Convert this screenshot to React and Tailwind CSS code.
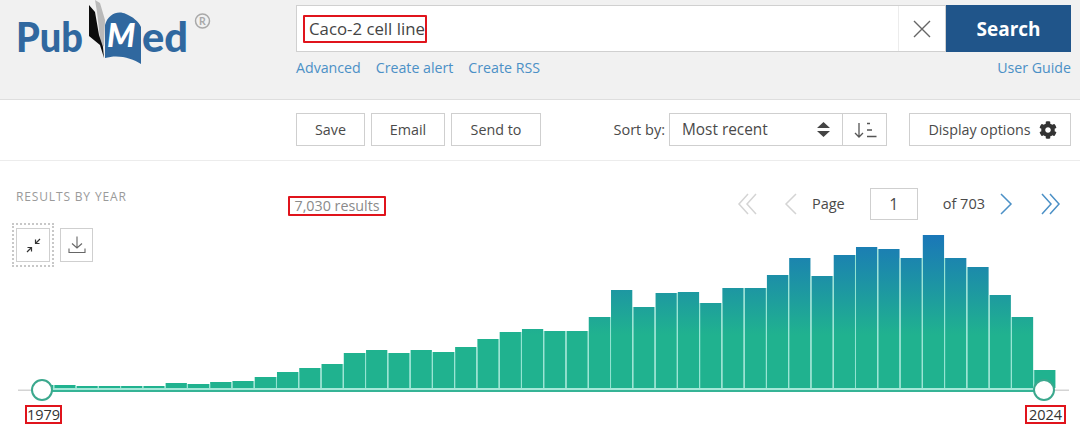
import React from 'react';
import { FaCog } from 'react-icons/fa';

const barTops = [
  385, 385, 386, 386, 386, 386, 383, 384, 382, 381, 377, 372, 368, 364, 353, 350,
  353, 350, 352, 347, 339, 332, 329, 331, 331, 317, 290, 307, 293, 292, 303, 288,
  288, 275, 258, 276, 255, 247, 249, 258, 235, 258, 267, 295, 317, 370,
];
const PITCH = 22.27;

const ToolButton = ({ className, children }) => (
  <button className={`h-[33px] pt-[1px] flex items-center justify-center bg-white border border-[#cfcfcf] text-[14.3px] text-[#4a4a4a] ${className}`}>
    {children}
  </button>
);

const Logo = () => (
  <svg width="230" height="72" viewBox="0 0 230 72" className="block">
    <text x="16" y="52" fill="#30689f" fontSize="41" fontWeight="900" fontFamily="Lato, sans-serif" textLength="67" lengthAdjust="spacingAndGlyphs">Pub</text>
    <path d="M95 0 L100 3 L105 20 L104 46 L101 48 L97 12 Z" fill="#b9b9b9" />
    <path d="M89 5 L95 12 L99 35 L103 47 L104 58 L100 45 L89 36 Z" fill="#0c0c0c" />
    <path d="M105 25 C108 14 118 10 126 14 C133 17 138 21 141 27 L141 64 C132 58 118 54 105 58 Z" fill="#30689f" />
    <text x="107" y="47" fill="#fff" fontSize="32" fontWeight="900" fontStyle="italic" fontFamily="Lato, sans-serif">M</text>
    <text x="142" y="52" fill="#30689f" fontSize="41" fontWeight="900" fontFamily="Lato, sans-serif" textLength="46" lengthAdjust="spacingAndGlyphs">ed</text>
    <circle cx="202.5" cy="21" r="7" fill="none" stroke="#a9a9a9" strokeWidth="1.5" />
    <text x="202.5" y="25" fill="#a9a9a9" fontSize="10.5" fontWeight="700" textAnchor="middle" fontFamily="Lato, sans-serif">R</text>
  </svg>
);

const Chevron = ({ double, left, color }) => (
  <svg width="22" height="24" viewBox="0 0 22 24" fill="none" stroke={color} strokeWidth="1.5">
    <g transform={left ? 'translate(22 0) scale(-1 1)' : undefined}>
      {double ? (
        <>
          <path d="M2 2 L11 12 L2 22" />
          <path d="M10 2 L19 12 L10 22" />
        </>
      ) : (
        <path d="M6 2 L16 12 L6 22" />
      )}
    </g>
  </svg>
);

const Chart = () => (
  <svg width="1080" height="183" viewBox="0 222 1080 183" className="block">
    <defs>
      <linearGradient id="bars" gradientUnits="userSpaceOnUse" x1="0" y1="235" x2="0" y2="335">
        <stop offset="0" stopColor="#1a77b8" />
        <stop offset="1" stopColor="#20b28f" />
      </linearGradient>
    </defs>
    {barTops.map((top, i) => (
      <rect key={i} x={32 + i * PITCH} y={top} width={PITCH - 1} height={388 - top} fill="url(#bars)" />
    ))}
    {barTops.slice(0, -1).map((top, i) => {
      const x = 32 + (i + 1) * PITCH - 0.5;
      return <line key={i} x1={x} x2={x} y1={Math.max(top, barTops[i + 1])} y2="388" stroke="#8fe3d0" strokeWidth="1" />;
    })}
    <rect x="18" y="389.5" width="1051" height="1.5" fill="#d4d4d4" />
    <rect x="42" y="388" width="1002" height="2" fill="#a5e8d8" />
    <rect x="42" y="390" width="1002" height="2" fill="#35b496" />
    <circle cx="42" cy="390" r="10" fill="#fff" stroke="#3ba88d" strokeWidth="2" />
    <circle cx="1044" cy="390" r="10" fill="#fff" stroke="#3ba88d" strokeWidth="2" />
  </svg>
);

const App = () => {
  return (
    <div className="w-[1080px] h-[426px] overflow-hidden bg-white font-['Open_Sans',sans-serif] text-[#4a4a4a]">
      {/* Search header */}
      <header className="h-[100px] flex bg-[#f1f1f1] border-b border-[#dedede]">
        <div className="w-[296px] shrink-0">
          <Logo />
        </div>
        <div className="w-[775px] pt-[5px]">
          <div className="h-[47px] flex">
            <div className="flex-1 flex items-center bg-white border border-[#d0d0d0] pl-[6px]">
              <span className="h-[28px] pl-[4px] flex items-center border-2 border-[#e0141c] rounded-[1px] text-[16.8px] text-[#444] whitespace-nowrap">Caco-2 cell line</span>
              <div className="ml-auto w-[47px] h-full flex items-center justify-center border-l border-[#ececec]">
                <svg width="18" height="18" viewBox="0 0 18 18" stroke="#666" strokeWidth="1.4">
                  <path d="M1 1 L17 17 M17 1 L1 17" />
                </svg>
              </div>
            </div>
            <button className="w-[125px] pt-[2px] bg-[#20558a] text-white text-[19px] font-bold">Search</button>
          </div>
          <div className="mt-[7px] flex text-[14.2px] leading-[18px] text-[#4b90c6]">
            <a>Advanced</a>
            <a className="ml-[15px]">Create alert</a>
            <a className="ml-[15px]">Create RSS</a>
            <a className="ml-auto">User Guide</a>
          </div>
        </div>
      </header>

      {/* Actions */}
      <div className="h-[61px] flex items-center pl-[296px] pr-[9px] pb-[1px] border-b border-[#ececec]">
        <ToolButton className="w-[69px]">Save</ToolButton>
        <ToolButton className="w-[74px] ml-[6px]">Email</ToolButton>
        <ToolButton className="w-[90px] ml-[6px]">Send to</ToolButton>
        <span className="ml-auto mr-[4px] text-[14.5px]">Sort by:</span>
        <div className="w-[174px] h-[33px] flex items-center justify-between px-[12px] border border-[#cfcfcf] text-[15.4px]">
          <span className="pt-[1px]">Most recent</span>
          <svg width="13" height="15" viewBox="0 0 13 15" fill="#444">
            <path d="M6.5 0 L13 6 H0 Z M0 9 H13 L6.5 15 Z" />
          </svg>
        </div>
        <div className="w-[44px] h-[33px] flex items-center justify-center border border-l-0 border-[#cfcfcf]">
          <svg width="24" height="16" viewBox="0 0 24 16" fill="none" stroke="#555" strokeWidth="1.3">
            <path d="M6 1 V15 M2 11 L6 15 L10 11" />
            <path d="M14 1.5 H17 M14 8 H19 M14 14.5 H23.5" />
          </svg>
        </div>
        <ToolButton className="w-[162px] ml-[22px] gap-[8px] pl-[5px]">
          <span>Display options</span>
          <FaCog className="text-[#333] text-[18px]" />
        </ToolButton>
      </div>

      {/* Results by year */}
      <section className="relative">
        <div className="h-[61px] flex items-start">
          <h3 className="w-[288px] pl-[16px] pt-[27px] text-[12px] leading-[18px] tracking-[0.85px] text-[#9a9a9a]">RESULTS BY YEAR</h3>
          <span className="mt-[35px] h-[20px] w-[98px] flex items-center justify-center border-2 border-[#e0141c] rounded-[1px] text-[14.3px] text-[#8a8a8a] whitespace-nowrap">7,030 results</span>
          <div className="ml-auto mr-[18px] mt-[27px] h-[32px] flex items-center text-[14.5px]">
            <Chevron double left color="#d4d4d4" />
            <span className="ml-[22px]"><Chevron left color="#d4d4d4" /></span>
            <span className="ml-[10px]">Page</span>
            <span className="ml-[25px] w-[48px] h-[32px] flex items-center justify-center border border-[#cfcfcf] text-[16px]">1</span>
            <span className="ml-[25px]">of 703</span>
            <span className="ml-[10px]"><Chevron color="#4b90c6" /></span>
            <span className="ml-[23px]"><Chevron double color="#4b90c6" /></span>
          </div>
        </div>
        <Chart />
        <div className="absolute left-[12px] top-[62px] flex items-center">
          <div className="px-[2px] py-[3px] border-2 border-dotted border-[#c8c8c8]">
            <div className="w-[34px] h-[34px] flex items-center justify-center border border-[#cfcfcf]">
              <svg width="15" height="15" viewBox="0 0 15 15" fill="none" stroke="#333" strokeWidth="1.2">
                <path d="M14 1 L10 5 M9.5 1.5 V5.5 H13.5" />
                <path d="M1 14 L5 10 M1.5 9.5 H5.5 V13.5" />
              </svg>
            </div>
          </div>
          <div className="ml-[6px] w-[33px] h-[34px] flex items-center justify-center border border-[#cfcfcf]">
            <svg width="18" height="18" viewBox="0 0 18 18" fill="none" stroke="#666" strokeWidth="1.1">
              <path d="M9 0.5 V12 M4 7.5 L9 12 L14 7.5" />
              <path d="M1 12.5 V16.5 H17 V12.5" />
            </svg>
          </div>
        </div>
        <div className="flex justify-between pl-[25px] pr-[14px]">
          <span className="w-[37px] h-[19px] flex items-center justify-center border-2 border-[#e0141c] text-[14.5px] text-[#333]">1979</span>
          <span className="w-[41px] h-[19px] flex items-center justify-center border-2 border-[#e0141c] text-[14.5px] text-[#333]">2024</span>
        </div>
      </section>
    </div>
  );
};

export default App;
